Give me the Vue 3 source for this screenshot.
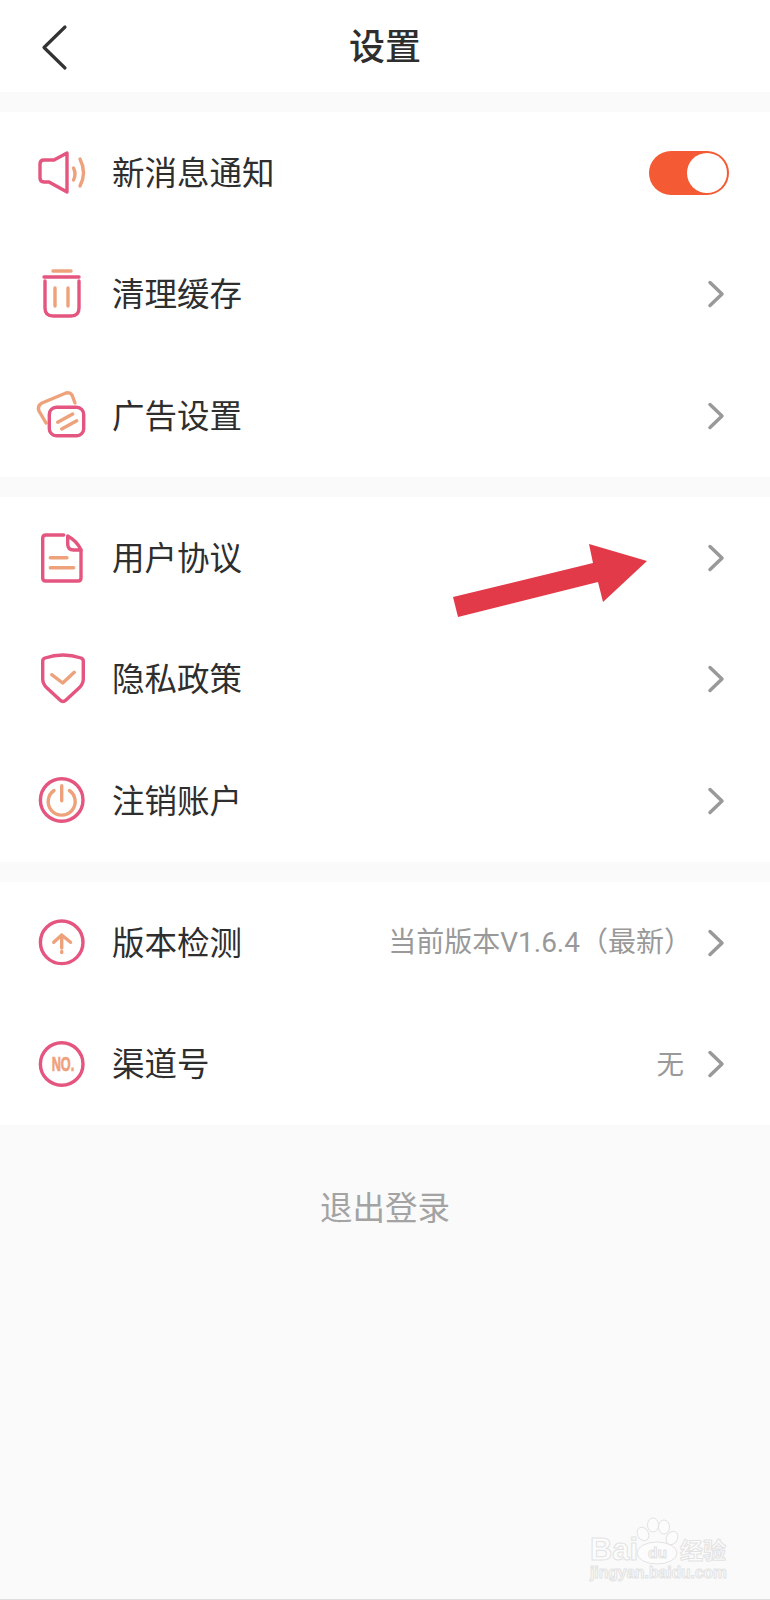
<script setup>
const sections = [
  [
    { icon: 'sound', label: '新消息通知', toggle: true },
    { icon: 'trash', label: '清理缓存' },
    { icon: 'cards', label: '广告设置' },
  ],
  [
    { icon: 'doc', label: '用户协议' },
    { icon: 'shield', label: '隐私政策' },
    { icon: 'power', label: '注销账户' },
  ],
  [
    { icon: 'update', label: '版本检测', value: '当前版本V1.6.4（最新）', long: true },
    { icon: 'no', label: '渠道号', value: '无' },
  ],
];
</script>

<template>
  <div class="page">
    <header class="topbar">
      <svg class="back" width="30" height="50" viewBox="0 0 30 50">
        <path d="M25 4 L4 24.500 L25 45" />
      </svg>
      <h1>设置</h1>
    </header>

    <section v-for="(rows, i) in sections" :key="i" class="group">
      <div v-for="row in rows" :key="row.label" class="row">
        <svg class="icon" width="56" height="56" viewBox="0 0 56 56">
          <template v-if="row.icon === 'sound'">
            <path class="pink" d="M20 15 L33 8 V47 L15 37 H10 Q6 37 6 33 V19 Q6 15 10 15 Z" />
            <path class="peach" d="M39.500 23 Q42.500 29 39.500 35" />
            <path class="peach" d="M46 14 Q53 28 46 41" />
          </template>
          <template v-else-if="row.icon === 'trash'">
            <path class="pink" d="M10 11 H45" />
            <path class="peach" d="M19 5 H37" />
            <path class="pink" d="M11 15 V42 Q11 50 19 50 H37 Q45 50 45 42 V15" />
            <path class="peach" d="M21 22 V40 M34 22 V40" />
          </template>
          <template v-else-if="row.icon === 'cards'">
            <path class="peach" d="M12 35 L5 23 Q3 18 8 15 L32 5 Q36 4 38 7 L41 15" />
            <rect class="pink" x="15.300" y="19.300" width="34.400" height="28.400" rx="7" />
            <path class="peach" d="M23.700 34.300 L38.700 26 M27.700 41 L42.700 32.700" />
          </template>
          <template v-else-if="row.icon === 'doc'">
            <path class="pink" d="M29.700 5 H12 Q8.700 5 8.700 8.300 V48 Q8.700 51 11.700 51 H44 Q47 51 47 48 V20" />
            <path class="pink" d="M33.700 6 V14 Q33.700 20 39.700 20 H47 Q43 11 33.700 6 Z" />
            <path class="peach" d="M16.300 27.700 H33 M16.300 37.700 H39.700" />
          </template>
          <template v-else-if="row.icon === 'shield'">
            <path class="pink" d="M29 4 Q38 4 47 7 Q49.300 8 49.300 10 V28 Q49.300 33 45 37 L32 49 Q29 52 26 49 L13 37 Q8.700 33 8.700 28 V10 Q8.700 8 11 7 Q20 4 29 4 Z" />
            <path class="peach" d="M17.700 23.700 L28.700 32 L40.300 21.300" />
          </template>
          <template v-else-if="row.icon === 'power'">
            <circle class="pink" cx="27.700" cy="27" r="21.300" />
            <path class="peach" d="M20 17.500 A13.500 13.500 0 1 0 35.400 17.500" />
            <path class="peach" d="M27.700 12.700 V27.700" />
          </template>
          <template v-else-if="row.icon === 'update'">
            <circle class="pink" cx="27.700" cy="27.300" r="21.300" />
            <path class="peach" d="M19.700 27.300 L27.700 20 L36.500 27.300 M27.700 20 V33" />
            <path class="peach" d="M27.700 36.500 V37.500" />
          </template>
          <template v-else>
            <circle class="pink" cx="27.700" cy="28" r="21.300" />
            <text class="no" x="17.700" y="35" textLength="22.600" lengthAdjust="spacingAndGlyphs">NO.</text>
          </template>
        </svg>

        <span class="label">{{ row.label }}</span>

        <span v-if="row.toggle" class="toggle"><i></i></span>
        <template v-else>
          <span v-if="row.value" :class="['value', { long: row.long }]">{{ row.value }}</span>
          <svg class="chevron" width="18" height="28" viewBox="0 0 18 28">
            <path d="M3 2.500 L15 14 L3 25.500" />
          </svg>
        </template>
      </div>
    </section>

    <div class="logout">退出登录</div>

    <!-- red arrow annotation, lies over the row -->
    <svg class="annotation" width="200" height="80" viewBox="0 0 200 80">
      <path d="M3 57 L143 23 L139 4 L197 21 L153 62 L148 42 L8 77 Z" />
    </svg>

    <!-- watermark -->
    <svg class="watermark" width="160" height="72" viewBox="0 0 160 72">
      <text class="wm-big" x="1" y="44" textLength="48" lengthAdjust="spacingAndGlyphs">Bai</text>
      <ellipse class="paw" cx="54" cy="18" rx="5.500" ry="7" transform="rotate(-30 54 18)" />
      <ellipse class="paw" cx="64" cy="9" rx="5.500" ry="7" />
      <ellipse class="paw" cx="75" cy="11" rx="5.500" ry="7" />
      <ellipse class="paw" cx="83" cy="22" rx="5.500" ry="7" transform="rotate(30 83 22)" />
      <ellipse class="paw" cx="68" cy="37" rx="20" ry="11" />
      <text class="wm-du" x="59" y="42" textLength="19" lengthAdjust="spacingAndGlyphs">du</text>
      <text class="wm-cn" x="91" y="43" textLength="46" lengthAdjust="spacingAndGlyphs">经验</text>
      <text class="wm-url" x="1" y="62" textLength="137" lengthAdjust="spacingAndGlyphs">jingyan.baidu.com</text>
    </svg>
  </div>
</template>

<style>
html, body {
  margin: 0;
  background: #fafafa;
}
</style>

<style scoped>
.page {
  position: relative;
  height: 1600px;
  overflow: hidden;
  box-sizing: border-box;
  background: #fafafa;
  border-bottom: 1px solid #dedede;
  font-family: "Noto Sans", "Noto Sans CJK SC", sans-serif;
  color: #2e2e2e;
}

.topbar {
  position: relative;
  height: 92px;
  background: #fff;
  display: flex;
  align-items: center;
  justify-content: center;
}
.topbar h1 {
  margin: 0 0 -2px;
  font-size: 36px;
  font-weight: 500;
  line-height: 1;
}
.back {
  position: absolute;
  left: 40px;
  top: 23px;
}
.back path {
  fill: none;
  stroke: #333;
  stroke-width: 3.200;
  stroke-linecap: round;
  stroke-linejoin: round;
}

.group {
  margin-top: 20px;
  background: #fff;
}
.row {
  height: 121.670px;
  display: flex;
  align-items: center;
  padding: 0 41px 0 34px;
  box-sizing: border-box;
}
.icon {
  flex: none;
  margin-right: 22px;
}
.pink,
.peach {
  fill: none;
  stroke-width: 3.400;
  stroke-linecap: round;
  stroke-linejoin: round;
}
.pink {
  stroke: #e4557f;
}
.peach {
  stroke: #eea27c;
}
.no {
  fill: #f0a07a;
  stroke: #f0a07a;
  stroke-width: 0.700;
  font-family: "Liberation Sans", sans-serif;
  font-size: 20px;
  font-weight: 700;
}

.label {
  flex: 1;
  font-size: 32.500px;
  line-height: 1;
}
.value {
  font-family: Roboto, "Noto Sans CJK SC", sans-serif;
  font-size: 27.500px;
  color: #999;
  margin-right: 23px;
  line-height: 1;
}
.value.long {
  font-size: 28px;
  margin-right: 15px;
}
.chevron {
  flex: none;
  margin-right: 4px;
}
.chevron path {
  fill: none;
  stroke: #999;
  stroke-width: 3.500;
  stroke-linecap: round;
  stroke-linejoin: round;
}

.toggle {
  position: relative;
  width: 80px;
  height: 44px;
  border-radius: 22px;
  background: #f45a33;
}
.toggle i {
  position: absolute;
  right: 2px;
  top: 2px;
  width: 40px;
  height: 40px;
  border-radius: 50%;
  background: #fff;
}

.logout {
  padding: 64px 0;
  text-align: center;
  font-size: 32.500px;
  line-height: 38px;
  color: #a3a3a3;
}

.annotation {
  position: absolute;
  left: 450px;
  top: 540px;
}
.annotation path {
  fill: #e23a48;
}

.watermark {
  position: absolute;
  left: 589px;
  top: 1516px;
}
.watermark text {
  fill: #fcfcfc;
  stroke: #e3e3e3;
  stroke-width: 1;
  font-family: "Liberation Sans", "Noto Sans CJK SC", sans-serif;
  font-weight: 700;
}
.wm-big {
  font-size: 31px;
}
.wm-du {
  font-size: 15px;
}
.wm-cn {
  font-size: 23px;
}
.wm-url {
  font-size: 16px;
}
.paw {
  fill: #fcfcfc;
  stroke: #e3e3e3;
  stroke-width: 1;
}
</style>
